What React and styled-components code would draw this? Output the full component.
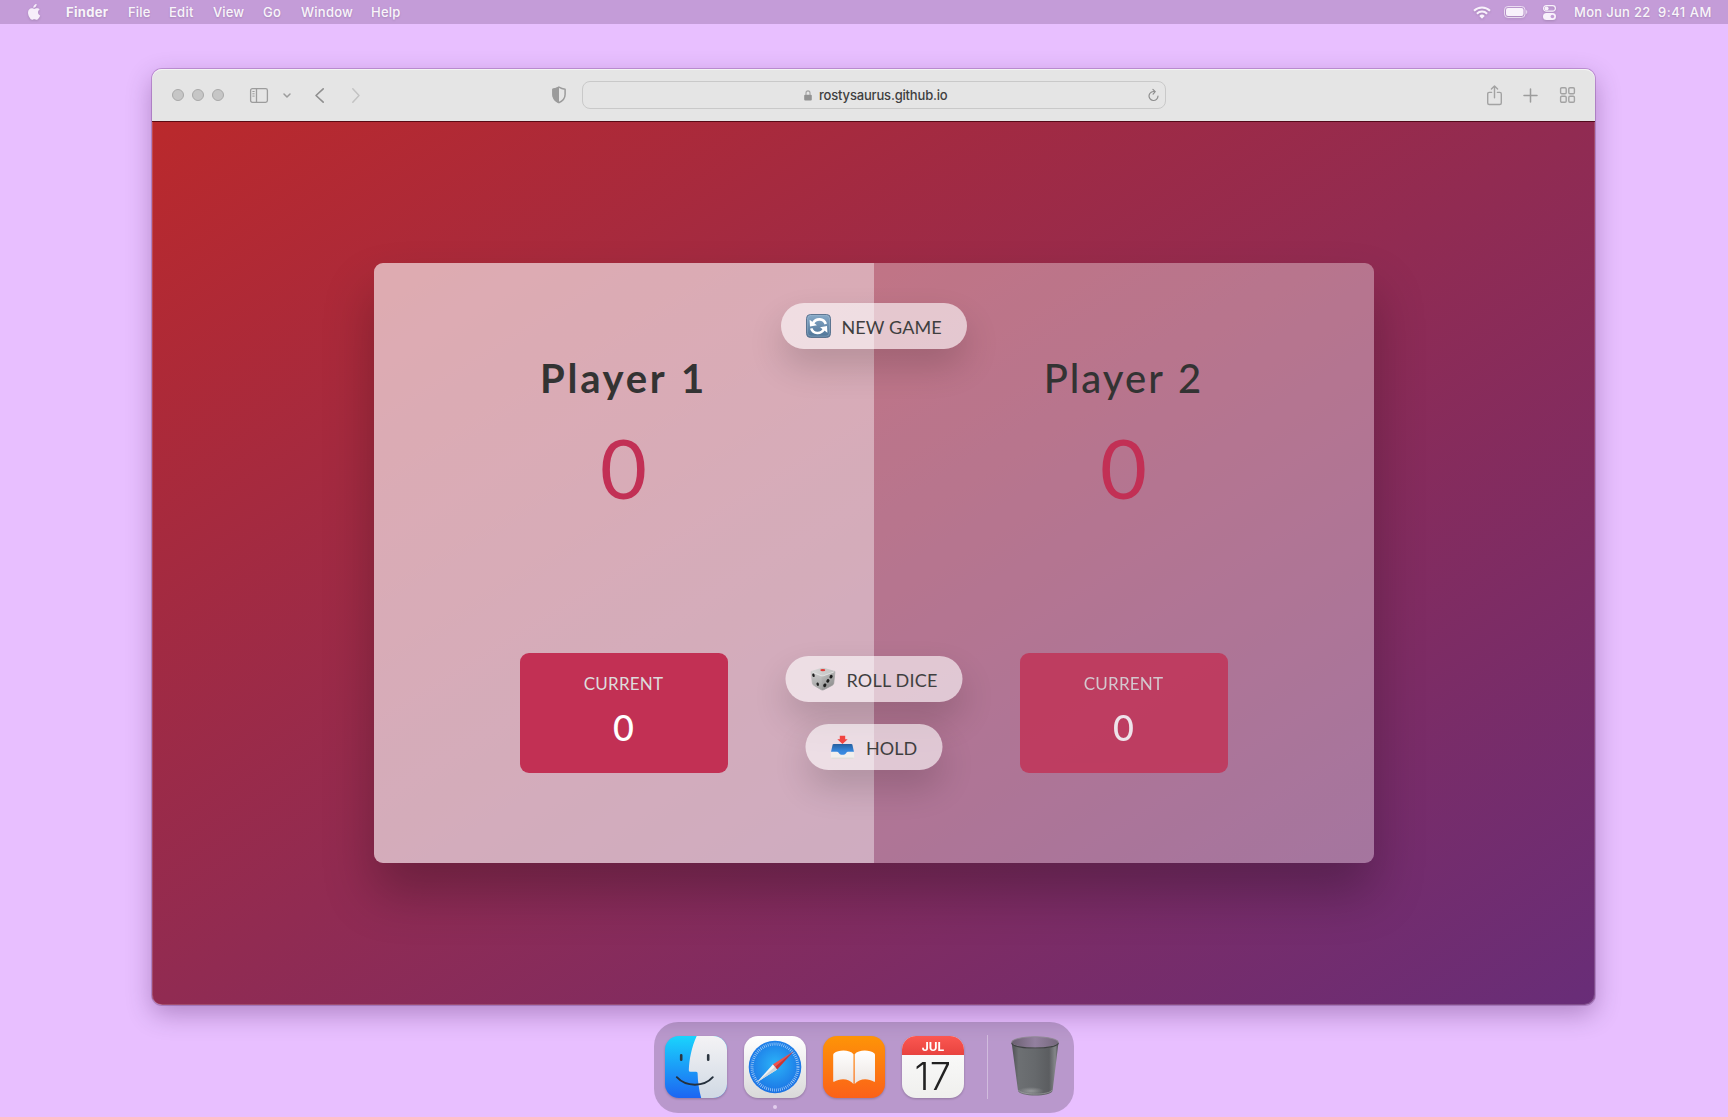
import React from "react";
import styled, { createGlobalStyle } from "styled-components";

const GlobalStyle = createGlobalStyle`
  *, *::before, *::after { box-sizing: border-box; }
  html, body { margin: 0; padding: 0; }
  body { background: #e8bfff; overflow: hidden; }
  svg { display: block; flex: none; overflow: visible; }
`;

const UI = `Inter, "Liberation Sans", sans-serif`;
const ROUND = `Lato, "Open Sans", sans-serif`;

const Desktop = styled.div`
  width: 1728px;
  height: 1117px;
  display: flex;
  flex-direction: column;
  align-items: center;
  background: #e8bfff;
  font-family: ${UI};
`;

/* ---------- menu bar ---------- */

const MenuBar = styled.header`
  width: 100%;
  height: 24px;
  flex: none;
  display: flex;
  align-items: center;
  padding: 0 17px 0 27px;
  background: #c49cd8;
  color: rgba(255, 255, 255, 0.93);
  font-size: 13px;
  line-height: 24px;
  svg { filter: drop-shadow(0 1px 1px rgba(0, 0, 0, 0.14)); }
`;

const MenuItem = styled.span`
  width: ${(p) => p.$w}px;
  flex: none;
  white-space: nowrap;
  font-weight: ${(p) => (p.$bold ? 700 : 450)};
  letter-spacing: ${(p) => p.$ls || 0}px;
  text-shadow: 0 1px 2px rgba(0, 0, 0, 0.14);
`;

const AppleSlot = styled.span`
  width: 39px;
  flex: none;
`;

const StatusGroup = styled.div`
  margin-left: auto;
  display: flex;
  align-items: center;
`;

const StatusSlot = styled.span`
  margin-left: ${(p) => p.$gap}px;
`;

const Clock = styled.span`
  margin-left: 18px;
  display: flex;
  white-space: nowrap;
  font-weight: 450;
  text-shadow: 0 1px 2px rgba(0, 0, 0, 0.14);
`;

const ClockPart = styled.span`
  width: ${(p) => p.$w}px;
  letter-spacing: ${(p) => p.$ls}px;
`;

/* ---------- browser window ---------- */

const Window = styled.section`
  width: 1443px;
  height: 936px;
  flex: none;
  margin: 45px 0 0 19px;
  display: flex;
  flex-direction: column;
  border-radius: 10px;
  box-shadow: 0 0 0 1px rgba(80, 20, 100, 0.25), 0 9px 26px rgba(50, 0, 70, 0.3);
`;

const Toolbar = styled.div`
  height: 52px;
  flex: none;
  display: flex;
  align-items: center;
  padding: 0 20px;
  background: #e5e5e5;
  border-radius: 10px 10px 0 0;
  box-shadow: inset 0 1px 0 #f4f4f4;
`;

const Lights = styled.div`
  display: flex;
  gap: 8px;
`;

const Light = styled.i`
  width: 12px;
  height: 12px;
  border-radius: 50%;
  background: #c6c6c6;
  border: 1px solid #a9a9a9;
`;

const Tool = styled.span`
  margin-left: ${(p) => p.$gap}px;
`;

const AddressBar = styled.div`
  width: 584px;
  height: 28px;
  margin-left: 15px;
  padding: 0 6px 0 0;
  display: grid;
  grid-template-columns: 229px auto 1fr;
  align-items: center;
  border: 1px solid #c9c9c9;
  border-radius: 8px;
  color: #3f3f3f;
  font-size: 13px;
  font-weight: 450;
`;

const AddressText = styled.span`
  padding: 0 0 0 7px;
  letter-spacing: -0.18px;
`;

const End = styled.span`
  justify-self: end;
`;

const ToolGroup = styled.div`
  margin-left: auto;
  display: flex;
  align-items: center;
`;

const Page = styled.main`
  flex: 1;
  display: flex;
  align-items: center;
  justify-content: center;
  border-radius: 0 0 10px 10px;
  background: linear-gradient(to top left, #682d78 0%, #ba292c 100%);
  box-shadow: inset 0 1px 0 rgba(60, 0, 10, 0.75),
    inset -1px -1px 0 rgba(255, 255, 255, 0.16), inset 1px 0 0 rgba(255, 255, 255, 0.16);
`;

/* ---------- game board ---------- */

const Board = styled.div`
  position: relative;
  width: 1000px;
  height: 600px;
  display: flex;
  border-radius: 9px;
  background: rgba(255, 255, 255, 0.35);
  box-shadow: 0 30px 50px rgba(0, 0, 0, 0.25);
  font-family: ${ROUND};
  color: #333;
`;

const PlayerPanel = styled.section`
  flex: 1;
  display: flex;
  flex-direction: column;
  align-items: center;
  padding: 90px;
  border-radius: ${(p) => (p.$active ? "9px 0 0 9px" : "0 9px 9px 0")};
  background: ${(p) => (p.$active ? "rgba(255, 255, 255, 0.4)" : "none")};
`;

const PlayerName = styled.h2`
  margin: 0 0 13.6px;
  font-size: 40px;
  line-height: 51px;
  white-space: nowrap;
  font-weight: ${(p) => (p.$active ? 700 : 500)};
  letter-spacing: ${(p) => (p.$active ? 2.7 : 2)}px;
  word-spacing: 2px;
`;

const Score = styled.p`
  margin: 0 0 auto;
  font-size: 81px;
  line-height: 100px;
  font-weight: 400;
  color: #c23055;
`;

const CurrentBox = styled.div`
  width: 208px;
  height: 120px;
  padding: 20px;
  border-radius: 9px;
  background: #c23054;
  text-align: center;
  color: #fff;
  opacity: ${(p) => (p.$active ? 1 : 0.8)};
`;

const CurrentLabel = styled.p`
  margin: 0 0 10px;
  font-size: 17px;
  line-height: 22px;
  letter-spacing: 0.2px;
  color: #ddd;
`;

const CurrentScore = styled.p`
  margin: 0;
  font-size: 36px;
  line-height: 45px;
  font-weight: 500;
`;

const PillButton = styled.button`
  position: absolute;
  top: ${(p) => p.$top}px;
  left: 50%;
  transform: translateX(-50%);
  width: ${(p) => p.$w}px;
  height: 46px;
  padding: 0 0 0 25px;
  display: flex;
  align-items: center;
  gap: ${(p) => p.$gap}px;
  border: 0;
  border-radius: 50px;
  background: rgba(255, 255, 255, 0.6);
  box-shadow: 0 17.5px 35px rgba(0, 0, 0, 0.16);
  color: #3f3f3f;
  font-family: ${ROUND};
  font-size: 18px;
  white-space: nowrap;
`;

const PillLabel = styled.span`
  line-height: 22px;
  padding-top: 2px;
  letter-spacing: ${(p) => p.$ls}px;
`;

/* ---------- dock ---------- */

const Dock = styled.nav`
  width: 420px;
  height: 91px;
  flex: none;
  margin: 17px 0 0 0;
  padding: 14px 14px 0 11px;
  display: flex;
  align-items: flex-start;
  border-radius: 24px;
  background: rgba(0, 0, 0, 0.2);
`;

const AppSlot = styled.div`
  margin-right: 17px;
  display: flex;
  flex-direction: column;
  align-items: center;
  svg, & > div { filter: drop-shadow(0 1px 1px rgba(0, 0, 0, 0.22)); }
`;

const RunningDot = styled.i`
  width: 4px;
  height: 4px;
  margin-top: 7px;
  border-radius: 50%;
  background: #e2cdec;
`;

const CalendarTile = styled.div`
  width: 62px;
  height: 62px;
  border-radius: 14px;
  overflow: hidden;
  background: linear-gradient(#fdfdfd, #efefed);
  text-align: center;
`;

const CalendarMonth = styled.div`
  height: 19px;
  background: linear-gradient(#fb5751, #e8433f);
  color: #fff;
  font-size: 12px;
  font-weight: 700;
  line-height: 21px;
`;

const CalendarDay = styled.div`
  color: #222;
  font-size: 38px;
  font-weight: 300;
  line-height: 42px;
  letter-spacing: 0.5px;
`;

const Divider = styled.i`
  width: 1px;
  height: 64px;
  margin: -1px 23px 0 6px;
  background: rgba(255, 255, 255, 0.35);
`;

/* ---------- drawings ---------- */

const Apple = () => (
  <svg width="14" height="16" viewBox="0 0 14 16" fill="#f6eefa">
    <path d="M9.600.1c.1 1-.3 1.900-.9 2.600-.6.700-1.500 1.200-2.400 1.100-.1-.9.300-1.900.9-2.500C7.800.6 8.800.1 9.600.1z" />
    <path d="M12.700 5.500c-1.100.7-1.700 1.600-1.700 2.900 0 1.400.8 2.500 2.200 3-.3 1-.9 2-1.500 2.900-.6.800-1.200 1.500-2.100 1.500s-1.200-.5-2.300-.5-1.400.5-2.200.5c-.9 0-1.600-.8-2.200-1.700C1.800 12.500 1 10.600 1 8.800c0-2.900 1.900-4.500 3.800-4.500 1 0 1.800.6 2.500.6.600 0 1.600-.7 2.800-.7 1 0 2 .5 2.600 1.300z" />
  </svg>
);

const Wifi = () => (
  <svg width="18" height="13" viewBox="0 0 18 13" fill="none" stroke="#f8f1fb" strokeWidth="2">
    <path d="M1 4.700a11.500 11.500 0 0 1 16 0" />
    <path d="M3.900 7.700a7.300 7.300 0 0 1 10.200 0" />
    <path d="M9 12.700l-2.700-2.800a3.900 3.900 0 0 1 5.400 0z" fill="#f8f1fb" stroke="none" />
  </svg>
);

const Battery = () => (
  <svg width="24" height="12" viewBox="0 0 24 12">
    <rect x="0.500" y="0.500" width="20.500" height="11" rx="3.400" fill="none" stroke="#f8f1fb" strokeOpacity="0.750" />
    <rect x="2" y="2" width="17.500" height="8" rx="2" fill="#f8f1fb" />
    <path d="M22.200 4c1.400.5 1.400 3.500 0 4z" fill="#f8f1fb" fillOpacity="0.800" />
  </svg>
);

const Switches = () => (
  <svg width="13" height="15" viewBox="0 0 13 15">
    <rect x="0.600" y="0.600" width="11.800" height="5.600" rx="2.800" fill="none" stroke="#f8f1fb" strokeWidth="1.200" />
    <circle cx="3.600" cy="3.400" r="2" fill="#f8f1fb" />
    <rect x="0" y="8" width="13" height="7" rx="3.500" fill="#f8f1fb" />
    <circle cx="9.400" cy="11.500" r="1.800" fill="#c49cd8" />
  </svg>
);

const SidebarIcon = () => (
  <svg width="18" height="15" viewBox="0 0 18 15" fill="none" stroke="#9c9c9c" strokeWidth="1.300">
    <rect x="0.600" y="0.600" width="16.800" height="13.800" rx="1.800" />
    <path d="M6.500 .6v13.800" />
    <path d="M2.400 3.500h2.200M2.400 5.800h2.200M2.400 8.100h2.200" strokeWidth="1" />
  </svg>
);

const Chevron = ({ w, h, d, color, sw }) => (
  <svg width={w} height={h} viewBox={`0 0 ${w} ${h}`} fill="none" stroke={color} strokeWidth={sw} strokeLinecap="round" strokeLinejoin="round">
    <path d={d} />
  </svg>
);

const Shield = () => (
  <svg width="16" height="18" viewBox="0 0 16 18">
    <path d="M8 1.200c2 1.300 4 1.800 6.100 2v5.200c0 3.700-2.400 6.400-6.100 8.300-3.700-1.900-6.100-4.600-6.100-8.300V3.200C4 3 6 2.500 8 1.200z" fill="none" stroke="#9b9b9b" strokeWidth="1.500" strokeLinejoin="round" />
    <path d="M8 .6v16.600C4 15.300 1.500 12.400 1.500 8.400V2.900C4 2.700 6 2 8 .6z" fill="#9b9b9b" />
  </svg>
);

const Lock = () => (
  <svg width="8" height="11" viewBox="0 0 8 11">
    <rect x="0.200" y="4.700" width="7.600" height="5.800" rx="1" fill="#929292" />
    <path d="M2 5V3a2 2.100 0 0 1 4 0v2" fill="none" stroke="#a3a3a3" strokeWidth="1.100" />
  </svg>
);

const Reload = () => (
  <svg width="11" height="12" viewBox="0 0 11 12" fill="none" stroke="#8e8e8e" strokeWidth="1.200" strokeLinecap="round" strokeLinejoin="round">
    <path d="M6.800 2.700A4.500 4.500 0 1 0 10 7" />
    <path d="M4.900.4l2.300 2.300-2.100 2.400" />
  </svg>
);

const Share = () => (
  <svg width="15" height="21" viewBox="0 0 15 21" fill="none" stroke="#a3a3a3" strokeWidth="1.400" strokeLinecap="round" strokeLinejoin="round">
    <path d="M4.600 7.400H2.200Q.7 7.400.7 8.900V18q0 1.500 1.500 1.500h10.600q1.500 0 1.500-1.500V8.900q0-1.500-1.500-1.500h-2.400" />
    <path d="M7.500 12.700V1M4.400 4L7.500.9 10.600 4" />
  </svg>
);

const Plus = () => (
  <svg width="13" height="15" viewBox="0 0 13 15" stroke="#9c9c9c" strokeWidth="1.500" strokeLinecap="round">
    <path d="M6.500 1v13M0 7.500h13" />
  </svg>
);

const Grid = () => (
  <svg width="15" height="16" viewBox="0 0 15 16" fill="none" stroke="#a3a3a3" strokeWidth="1.400">
    <rect x="0.600" y="0.700" width="5.600" height="6" rx="1.200" />
    <rect x="8.800" y="0.700" width="5.600" height="6" rx="1.200" />
    <rect x="0.600" y="9.300" width="5.600" height="6" rx="1.200" />
    <rect x="8.800" y="9.300" width="5.600" height="6" rx="1.200" />
  </svg>
);

const RefreshEmoji = () => (
  <svg width="25" height="24" viewBox="0 0 25 24">
    <defs>
      <linearGradient id="rf" x1="0" y1="0" x2="0" y2="1">
        <stop offset="0" stopColor="#88aac8" />
        <stop offset="1" stopColor="#4d7396" />
      </linearGradient>
    </defs>
    <rect x="0.500" y="0.500" width="24" height="23" rx="4" fill="url(#rf)" stroke="#5c7490" />
    <rect x="1.600" y="1.400" width="21.800" height="20.800" rx="3.400" fill="none" stroke="#a9c3d8" strokeOpacity="0.500" strokeWidth="0.800" />
    <g fill="none" stroke="#fff" strokeWidth="2.600">
      <path d="M19.800 10C17.800 4.300 10.200 3.700 7 9.200" />
      <path d="M5.200 14.400c2 5.700 9.600 6.300 12.800.8" />
    </g>
    <path d="M3.600 5.700L4 12.500l7-1.300zM21.400 18.700l-.4-6.800-7 1.300z" fill="#fff" />
  </svg>
);

const DiceEmoji = () => (
  <svg width="25" height="24" viewBox="0 0 25 24">
    <defs>
      <linearGradient id="dt" x1="0" y1="0" x2="1" y2="0">
        <stop offset="0" stopColor="#d6d6d6" />
        <stop offset="1" stopColor="#c3c3c3" />
      </linearGradient>
      <linearGradient id="dl" x1="0" y1="0" x2="0" y2="1">
        <stop offset="0" stopColor="#cbcbcb" />
        <stop offset="1" stopColor="#a4a4a4" />
      </linearGradient>
      <linearGradient id="dr" x1="0" y1="0" x2="0.500" y2="1">
        <stop offset="0" stopColor="#c4c4c4" />
        <stop offset="1" stopColor="#8f8f8f" />
      </linearGradient>
    </defs>
    <path d="M1 4.200L11.500 8.600 12 22.900Q11.200 23 10.400 22.500L3.300 18.300Q2.100 17.600 1.900 16.300L.6 5.300Q.5 4.600 1 4.200z" fill="url(#dl)" stroke="url(#dl)" strokeWidth="0.800" />
    <path d="M24 4.200L11.300 8.600 11.800 22.900Q12.800 23 13.600 22.500L21.700 18.300Q23 17.600 23.200 16.300L24.400 5.300Q24.500 4.600 24 4.200z" fill="url(#dr)" stroke="url(#dr)" strokeWidth="0.800" />
    <path d="M1.600 3.700L10.600.9Q12.300.4 14 .9L23.400 3.700Q25 4.400 23.500 5L13.400 8.700Q11.800 9.300 10.300 8.700L1.600 5.200Q.2 4.500 1.600 3.700z" fill="url(#dt)" />
    <path d="M2 5.300L10.400 8.700Q11.800 9.200 13.200 8.700L23.200 5.100" fill="none" stroke="#ececec" strokeWidth="0.700" />
    <ellipse cx="12.300" cy="3.100" rx="2.500" ry="1.200" fill="#e23a37" />
    <g fill="#1e1e1e">
      <ellipse cx="3" cy="8.300" rx="1.200" ry="1.800" transform="rotate(-16 3 8.300)" />
      <ellipse cx="7.200" cy="17.200" rx="1.200" ry="1.800" transform="rotate(-16 7.200 17.200)" />
      <ellipse cx="20.600" cy="9.600" rx="1.500" ry="1.900" transform="rotate(28 20.600 9.600)" />
      <ellipse cx="17.400" cy="13.900" rx="1.500" ry="1.900" transform="rotate(28 17.400 13.900)" />
      <ellipse cx="14.300" cy="18.300" rx="1.500" ry="1.900" transform="rotate(28 14.300 18.300)" />
    </g>
  </svg>
);

const TrayEmoji = () => (
  <svg width="24" height="25" viewBox="0 0 24 25">
    <defs>
      <linearGradient id="tb" x1="0" y1="0" x2="0" y2="1">
        <stop offset="0" stopColor="#245f9f" />
        <stop offset="0.500" stopColor="#3686dc" />
        <stop offset="1" stopColor="#3f91e8" />
      </linearGradient>
    </defs>
    <path d="M3.200 9h17.600Q21.600 9 21.900 9.800L23.500 17v6H.5v-6L2.100 9.800Q2.400 9 3.200 9z" fill="url(#tb)" />
    <path d="M.4 16.700h6.300c.9 0 1.300.8 1.800 1.500.8 1.100 1.800 1.600 3.500 1.600s2.700-.5 3.500-1.600c.5-.7.9-1.500 1.800-1.500h6.300V23q0 1-1 1H1.400Q.4 24 .4 23z" fill="#f1efed" />
    <path d="M.8 23.200h22.400" stroke="#d3cfce" strokeWidth="0.800" />
    <path d="M9.300.7h5.400v3.500h2.500L12 8.900 6.800 4.200h2.500z" fill="#f14441" />
  </svg>
);

const FinderIcon = () => (
  <svg width="62" height="62" viewBox="0 0 62 62">
    <defs>
      <linearGradient id="fb" x1="0" y1="0" x2="0" y2="1">
        <stop offset="0" stopColor="#1ad4fd" />
        <stop offset="1" stopColor="#1c65f2" />
      </linearGradient>
      <linearGradient id="fw" x1="0" y1="0" x2="0" y2="1">
        <stop offset="0" stopColor="#f4f3f5" />
        <stop offset="1" stopColor="#d0d9e4" />
      </linearGradient>
      <clipPath id="fc"><rect width="62" height="62" rx="14" /></clipPath>
    </defs>
    <g clipPath="url(#fc)">
      <rect width="62" height="62" fill="url(#fb)" />
      <path d="M31.700 0C26.500 11 24.200 24 23.800 34.200q0 1.600 1.600 1.600h5.700q1.500 0 1.500 1.500C32.800 46 34 54 36.200 62H62V0z" fill="url(#fw)" />
    </g>
    <path d="M16.200 19.200v4.500M43.200 19.200v4.500" stroke="#2c3640" strokeWidth="2.600" strokeLinecap="round" />
    <path d="M11.800 41.200C21 51.200 39 51.200 47.800 41.200" fill="none" stroke="#25303c" strokeWidth="1.900" strokeLinecap="round" />
  </svg>
);

const SafariIcon = () => (
  <svg width="62" height="62" viewBox="0 0 62 62">
    <defs>
      <linearGradient id="sw" x1="0" y1="0" x2="0" y2="1">
        <stop offset="0" stopColor="#ffffff" />
        <stop offset="1" stopColor="#d9d9d9" />
      </linearGradient>
      <radialGradient id="sb" cx="0.500" cy="0.450" r="0.550">
        <stop offset="0" stopColor="#2bb3f8" />
        <stop offset="1" stopColor="#1b72e4" />
      </radialGradient>
    </defs>
    <rect width="62" height="62" rx="14" fill="url(#sw)" />
    <circle cx="31" cy="31" r="26.300" fill="url(#sb)" />
    <circle cx="31" cy="31" r="23" fill="none" stroke="#fff" strokeOpacity="0.650" strokeWidth="3" strokeDasharray="0.700 1.307" />
    <path d="M12.700 46.400L29 28.200l4.200 5.200z" fill="#f3f3f3" />
    <path d="M31.100 30.800l2.100 2.600-20.500 13z" fill="#cfd5da" />
    <path d="M49.700 15.200L29 28.200l2.100 2.600z" fill="#f4524b" />
    <path d="M49.700 15.200L33.200 33.400l-2.100-2.600z" fill="#d2332f" />
  </svg>
);

const BooksIcon = () => (
  <svg width="62" height="62" viewBox="0 0 62 62">
    <defs>
      <linearGradient id="bo" x1="0" y1="0" x2="0" y2="1">
        <stop offset="0" stopColor="#fe9407" />
        <stop offset="1" stopColor="#fb6119" />
      </linearGradient>
      <linearGradient id="bp" x1="0" y1="0" x2="0" y2="1">
        <stop offset="0" stopColor="#ffffff" />
        <stop offset="1" stopColor="#ebe5e2" />
      </linearGradient>
    </defs>
    <rect width="62" height="62" rx="14" fill="url(#bo)" />
    <g fill="url(#bp)">
      <path d="M30.500 48V18.300C27 13.400 15.500 13.400 11 17.300q-.8.700-.8 1.800v26.200q0 .8.900.4C17 42 26 42 30.500 48z" />
      <path d="M31.700 48V18.300C35.200 13.400 46.700 13.400 51.200 17.300q.8.700.8 1.800v26.200q0 .8-.9.400C45.200 42 36.200 42 31.700 48z" />
    </g>
  </svg>
);

const TrashIcon = () => (
  <svg width="48" height="61" viewBox="0 0 48 61">
    <defs>
      <linearGradient id="tr" x1="0" y1="0" x2="1" y2="0">
        <stop offset="0" stopColor="#4e5053" />
        <stop offset="0.150" stopColor="#6d7073" />
        <stop offset="0.500" stopColor="#66696c" />
        <stop offset="0.800" stopColor="#5b5d60" />
        <stop offset="0.930" stopColor="#85878a" />
        <stop offset="1" stopColor="#4c4d50" />
      </linearGradient>
      <linearGradient id="ti" x1="0" y1="0" x2="1" y2="0">
        <stop offset="0" stopColor="#6b6071" />
        <stop offset="0.500" stopColor="#93809f" />
        <stop offset="1" stopColor="#75687c" />
      </linearGradient>
      <radialGradient id="ts" cx="0.500" cy="0.500" r="0.500">
        <stop offset="0" stopColor="#b3b5b6" stopOpacity="0.600" />
        <stop offset="1" stopColor="#b3b5b6" stopOpacity="0" />
      </radialGradient>
    </defs>
    <path d="M.6 6.500L7 54.500c.6 6.700 34 6.700 34.600 0L47.500 6.500z" fill="url(#tr)" />
    <ellipse cx="20" cy="55" rx="13" ry="4" fill="url(#ts)" />
    <path d="M7.300 54c3 5.500 31 5.500 34 0" fill="none" stroke="#a6a8aa" strokeOpacity="0.600" strokeWidth="1" />
    <ellipse cx="24" cy="6.400" rx="23.400" ry="5.600" fill="url(#ti)" stroke="#8c8891" strokeWidth="0.900" />
    <path d="M.7 7.100c2 6.600 44.600 6.600 46.700 0" fill="none" stroke="#3f4043" strokeWidth="1.100" />
  </svg>
);

/* ---------- data ---------- */

const menus = [
  { label: "Finder", w: 62, bold: true, ls: 0.3 },
  { label: "File", w: 41, ls: 0.2 },
  { label: "Edit", w: 44, ls: 0.25 },
  { label: "View", w: 50, ls: 0.15 },
  { label: "Go", w: 38, ls: 0.2 },
  { label: "Window", w: 70, ls: 0.25 },
  { label: "Help", w: 40, ls: 0.25 },
];

const players = [
  { name: "Player 1", score: 0, current: 0, active: true },
  { name: "Player 2", score: 0, current: 0, active: false },
];

const actions = [
  { label: "NEW GAME", top: 40, w: 186, gap: 11, ls: 0.1, Icon: RefreshEmoji },
  { label: "ROLL DICE", top: 393, w: 177, gap: 11.5, ls: 0.2, Icon: DiceEmoji },
  { label: "HOLD", top: 461, w: 137, gap: 12, ls: 0, Icon: TrayEmoji },
];

const MenuBarView = () => (
  <MenuBar>
    <AppleSlot><Apple /></AppleSlot>
    {menus.map((m) => (
      <MenuItem key={m.label} $w={m.w} $bold={m.bold} $ls={m.ls}>{m.label}</MenuItem>
    ))}
    <StatusGroup>
      <Wifi />
      <StatusSlot $gap={13}><Battery /></StatusSlot>
      <StatusSlot $gap={15}><Switches /></StatusSlot>
      <Clock>
        <ClockPart $w={84} $ls={0.3}>Mon Jun 22</ClockPart>
        <ClockPart $w={53} $ls={0.5}>9:41 AM</ClockPart>
      </Clock>
    </StatusGroup>
  </MenuBar>
);

const ToolbarView = () => (
  <Toolbar>
    <Lights><Light /><Light /><Light /></Lights>
    <Tool $gap={26}><SidebarIcon /></Tool>
    <Tool $gap={15}><Chevron w={8} h={5} d="M1 1l3 3 3-3" color="#9c9c9c" sw={1.5} /></Tool>
    <Tool $gap={24}><Chevron w={9} h={15} d="M8.200.8L1 7.500l7.200 6.700" color="#8f8f8f" sw={1.6} /></Tool>
    <Tool $gap={28}><Chevron w={8} h={15} d="M.8.8L7 7.500.8 14.200" color="#c3c3c3" sw={1.5} /></Tool>
    <Tool $gap={191}><Shield /></Tool>
    <AddressBar>
      <End><Lock /></End>
      <AddressText>rostysaurus.github.io</AddressText>
      <End><Reload /></End>
    </AddressBar>
    <ToolGroup>
      <Share />
      <Tool $gap={22}><Plus /></Tool>
      <Tool $gap={23}><Grid /></Tool>
    </ToolGroup>
  </Toolbar>
);

const BoardView = () => (
  <Board>
    {players.map((p) => (
      <PlayerPanel key={p.name} $active={p.active}>
        <PlayerName $active={p.active}>{p.name}</PlayerName>
        <Score>{p.score}</Score>
        <CurrentBox $active={p.active}>
          <CurrentLabel>CURRENT</CurrentLabel>
          <CurrentScore>{p.current}</CurrentScore>
        </CurrentBox>
      </PlayerPanel>
    ))}
    {actions.map(({ label, top, w, gap, ls, Icon }) => (
      <PillButton key={label} $top={top} $w={w} $gap={gap}>
        <Icon />
        <PillLabel $ls={ls}>{label}</PillLabel>
      </PillButton>
    ))}
  </Board>
);

const DockView = () => (
  <Dock>
    <AppSlot><FinderIcon /></AppSlot>
    <AppSlot><SafariIcon /><RunningDot /></AppSlot>
    <AppSlot><BooksIcon /></AppSlot>
    <AppSlot>
      <CalendarTile>
        <CalendarMonth>JUL</CalendarMonth>
        <CalendarDay>17</CalendarDay>
      </CalendarTile>
    </AppSlot>
    <Divider />
    <TrashIcon />
  </Dock>
);

export default function App() {
  return (
    <Desktop>
      <GlobalStyle />
      <MenuBarView />
      <Window>
        <ToolbarView />
        <Page><BoardView /></Page>
      </Window>
      <DockView />
    </Desktop>
  );
}
